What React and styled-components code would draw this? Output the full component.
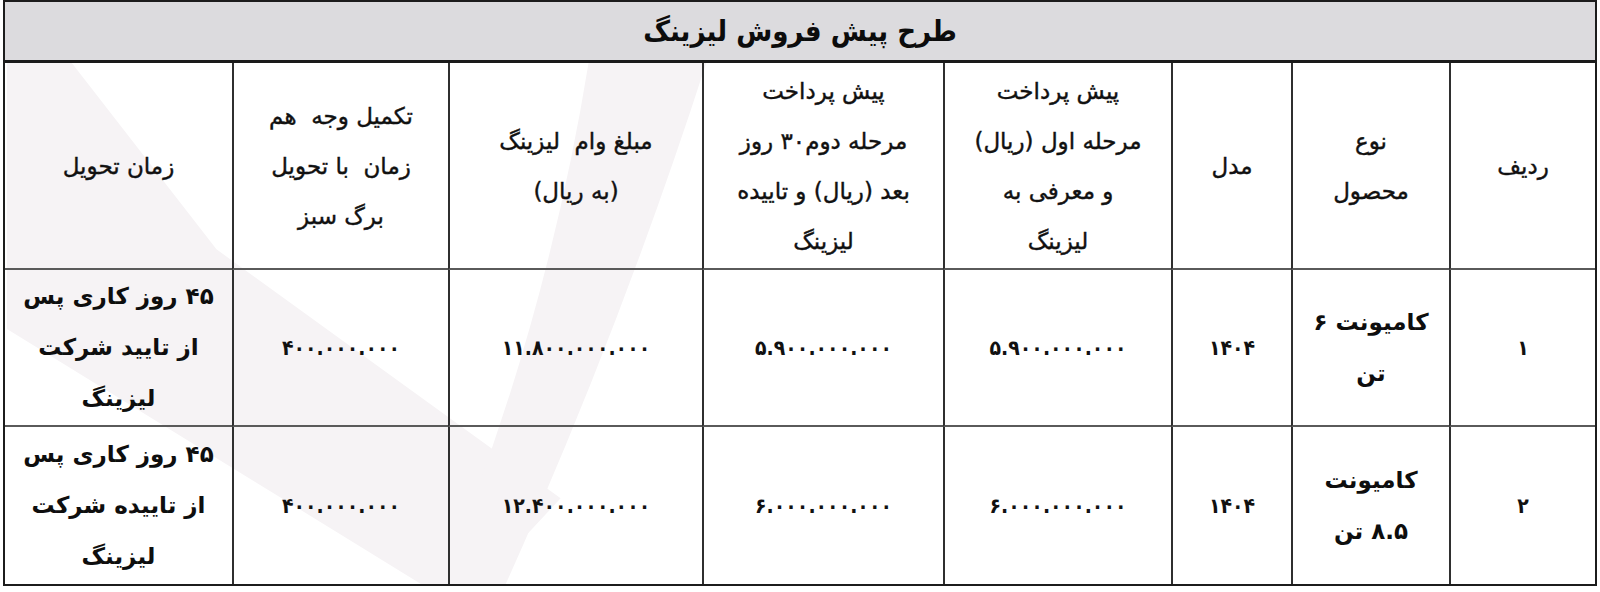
import React from "react";
import styled, { createGlobalStyle } from "styled-components";

const GlobalStyle = createGlobalStyle`
    html, body {
        margin: 0;
        padding: 0;
        background: #ffffff;
    }
    body {
        font-family: "DejaVu Sans", "Noto Sans", sans-serif;
        color: #111111;
    }
`;

const headers = [
    ["ردیف"],
    ["نوع", "محصول"],
    ["مدل"],
    ["پیش پرداخت", "مرحله اول (ریال)", "و معرفی به", "لیزینگ"],
    ["پیش پرداخت", "مرحله دوم۳۰ روز", "بعد (ریال) و تاییده", "لیزینگ"],
    ["مبلغ وام  لیزینگ", "(به ریال)"],
    ["تکمیل وجه  هم", "زمان  با تحویل", "برگ سبز"],
    ["زمان تحویل"],
];

const rows = [
    {
        radif: "۱",
        product: ["کامیونت ۶", "تن"],
        model: "۱۴۰۴",
        first: "۵.۹۰۰.۰۰۰.۰۰۰",
        second: "۵.۹۰۰.۰۰۰.۰۰۰",
        loan: "۱۱.۸۰۰.۰۰۰.۰۰۰",
        rest: "۴۰۰.۰۰۰.۰۰۰",
        delivery: ["۴۵ روز کاری پس", "از تایید شرکت", "لیزینگ"],
    },
    {
        radif: "۲",
        product: ["کامیونت", "۸.۵ تن"],
        model: "۱۴۰۴",
        first: "۶.۰۰۰.۰۰۰.۰۰۰",
        second: "۶.۰۰۰.۰۰۰.۰۰۰",
        loan: "۱۲.۴۰۰.۰۰۰.۰۰۰",
        rest: "۴۰۰.۰۰۰.۰۰۰",
        delivery: ["۴۵ روز کاری پس", "از تاییده شرکت", "لیزینگ"],
    },
];

const App = () => {
    return (
        <>
            <GlobalStyle />
            <Sheet dir="rtl">
                <Title>طرح پیش فروش لیزینگ</Title>
                <Body>
                    {/* واترمارک کم رنگ پشت جدول */}
                    <Watermark viewBox="3 63 1594 523" preserveAspectRatio="none">
                        <path d="M5 63 L70 63 L215 250 L560 500 L480 586 L420 586 L5 330 Z" />
                        <path d="M588 63 L706 63 Q620 330 505 586 L440 586 Q545 330 588 63 Z" />
                    </Watermark>

                    {headers.map((lines, i) => (
                        <Cell key={"h" + i} $last={i === 7}>
                            {lines.map((l, j) => (
                                <HeadLine key={j}>{l}</HeadLine>
                            ))}
                        </Cell>
                    ))}

                    {rows.map((r, i) => {
                        const bottom = i === rows.length - 1;
                        return (
                            <React.Fragment key={i}>
                                <Cell $bottom={bottom}><Num>{r.radif}</Num></Cell>
                                <Cell $bottom={bottom}>
                                    {r.product.map((l, j) => (
                                        <BoldLine key={j}>{l}</BoldLine>
                                    ))}
                                </Cell>
                                <Cell $bottom={bottom}><Num>{r.model}</Num></Cell>
                                <Cell $bottom={bottom}><Num>{r.first}</Num></Cell>
                                <Cell $bottom={bottom}><Num>{r.second}</Num></Cell>
                                <Cell $bottom={bottom}><Num>{r.loan}</Num></Cell>
                                <Cell $bottom={bottom}><Num>{r.rest}</Num></Cell>
                                <Cell $bottom={bottom} $last>
                                    {r.delivery.map((l, j) => (
                                        <BoldLine key={j}>{l}</BoldLine>
                                    ))}
                                </Cell>
                            </React.Fragment>
                        );
                    })}
                </Body>
            </Sheet>
        </>
    );
};

const Sheet = styled.div`
    margin: 0 3px;
    width: 1594px;
    box-sizing: border-box;
    border: 2px solid #1c1c1c;
    background: #ffffff;
`;

const Title = styled.div`
    height: 58px;
    background: #dcdbde;
    border-bottom: 3px solid #1a1a1a;
    display: flex;
    align-items: center;
    justify-content: center;
    font-family: "DejaVu Sans Condensed", "DejaVu Sans", sans-serif;
    font-weight: bold;
    font-size: 29px;
    color: #0c0c0c;
`;

const Body = styled.div`
    position: relative;
    display: grid;
    grid-template-columns: 146px 158px 120px 228px 241px 254px 216px 1fr;
    grid-template-rows: 207px 157px 157px;
`;

const Watermark = styled.svg`
    position: absolute;
    inset: 0;
    width: 100%;
    height: 100%;
    z-index: 0;
    pointer-events: none;

    & path {
        fill: #f6f3f5;
    }
`;

const Cell = styled.div`
    position: relative;
    z-index: 1;
    box-sizing: border-box;
    display: flex;
    flex-direction: column;
    align-items: center;
    justify-content: center;
    text-align: center;
    border-left: ${(p) => (p.$last ? "none" : "2px solid #2f2f2f")};
    border-bottom: ${(p) => (p.$bottom ? "none" : "2px solid #5a5a5a")};
`;

const HeadLine = styled.span`
    display: block;
    font-size: 23px;
    line-height: 50px;
    white-space: pre;
    color: #111111;
    -webkit-text-stroke: 0.4px #111111;
`;

const BoldLine = styled.span`
    display: block;
    font-size: 23px;
    font-weight: bold;
    line-height: 51px;
    white-space: pre;
    color: #0e0e0e;
`;

const Num = styled.span`
    font-family: "DejaVu Sans Condensed", "DejaVu Sans", sans-serif;
    font-weight: bold;
    font-size: 21px;
    letter-spacing: 0.6px;
    color: #111111;
`;

export default App;
